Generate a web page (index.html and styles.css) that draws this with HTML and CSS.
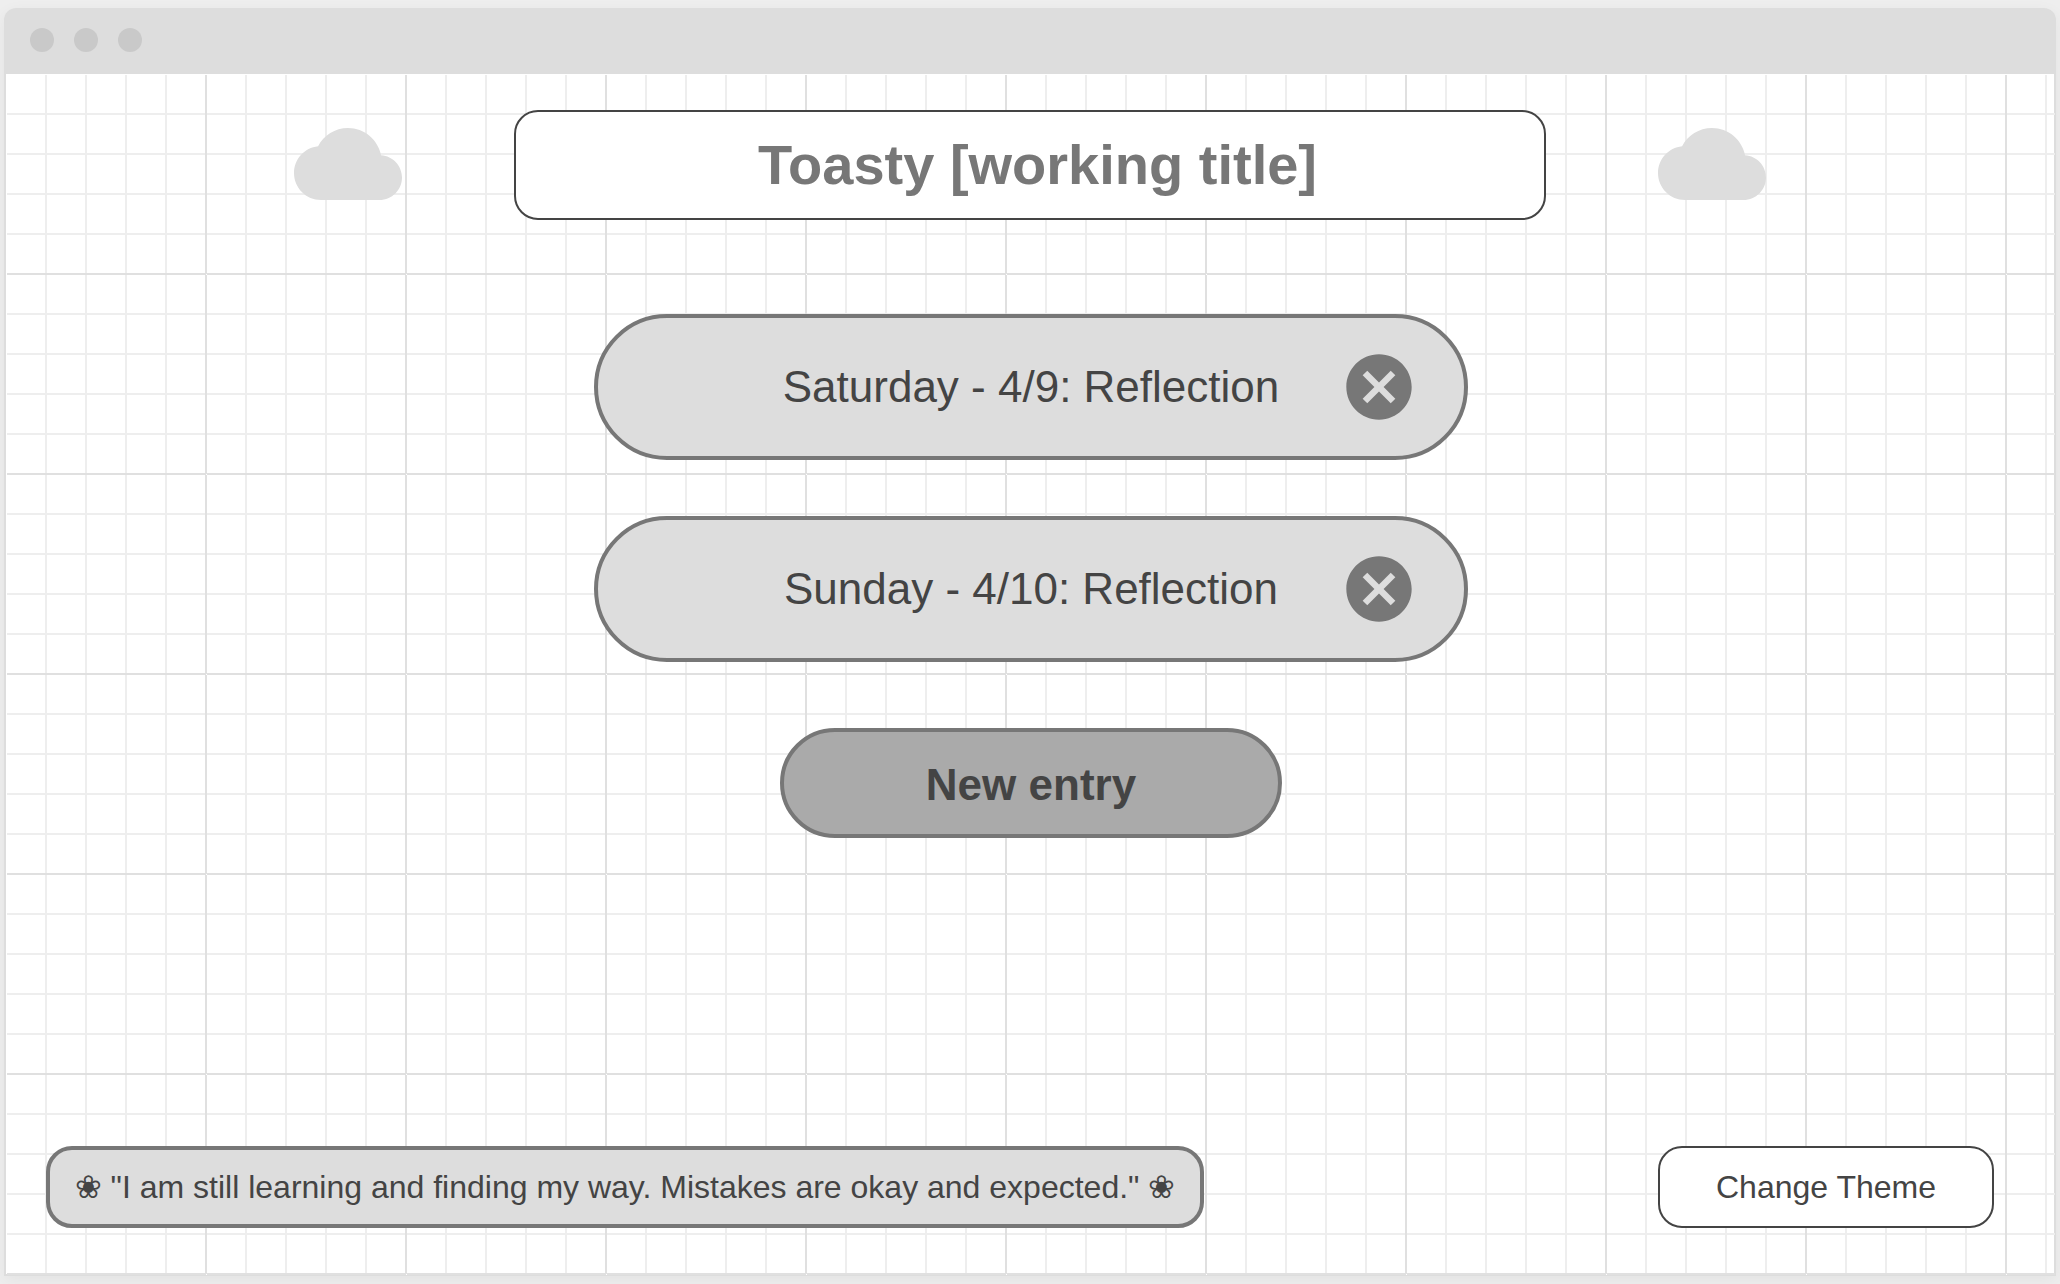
FILE: index.html
```html
<!DOCTYPE html>
<html lang="en">
<head>
<meta charset="utf-8">
<title>Toasty</title>
<link rel="stylesheet" href="styles.css">
</head>
<body>
<svg width="0" height="0" class="defs" aria-hidden="true">
  <symbol id="cloud" viewBox="0 4 24 16"><path d="M19.35 10.04C18.67 6.59 15.64 4 12 4 9.11 4 6.6 5.64 5.35 8.04 2.34 8.36 0 10.91 0 14c0 3.31 2.69 6 6 6h13c2.76 0 5-2.24 5-5 0-2.64-2.05-4.78-4.65-4.96z"/></symbol>
  <symbol id="cancel" viewBox="1.9 1.9 20.2 20.2"><path d="M12 2C6.47 2 2 6.47 2 12s4.47 10 10 10 10-4.47 10-10S17.53 2 12 2zm5 13.59L15.59 17 12 13.41 8.41 17 7 15.59 10.59 12 7 8.41 8.41 7 12 10.59 15.59 7 17 8.41 13.41 12 17 15.59z"/></symbol>
</svg>
<div class="window">
  <div class="titlebar"><span class="dot"></span><span class="dot"></span><span class="dot"></span></div>
  <div class="body">
    <div class="canvas">
      <header class="header">
        <svg class="cloud"><use href="#cloud"/></svg>
        <h1 class="title">Toasty [working title]</h1>
        <svg class="cloud"><use href="#cloud"/></svg>
      </header>
      <main class="entries">
        <div class="entry"><span class="entry-name">Saturday - 4/9: Reflection</span><svg class="cancel"><use href="#cancel"/></svg></div>
        <div class="entry"><span class="entry-name">Sunday - 4/10: Reflection</span><svg class="cancel"><use href="#cancel"/></svg></div>
        <button class="new-entry">New entry</button>
      </main>
      <footer class="footer">
        <div class="quote">❀ "I am still learning and finding my way. Mistakes are okay and expected." ❀</div>
        <button class="theme">Change Theme</button>
      </footer>
    </div>
  </div>
</div>
</body>
</html>
```
FILE: styles.css
```css
* { box-sizing: border-box; }
body {
  margin: 0;
  height: 1284px;
  padding: 8px 4px;
  overflow: hidden;
  background: #eee;
  color: #444;
  font-family: "Liberation Sans", Arial, "DejaVu Serif", sans-serif;
}
.defs { display: block; height: 0; }
button { font: inherit; color: inherit; padding: 0; }
.window {
  height: 1268px;
  display: flex;
  flex-direction: column;
  border-radius: 12px 12px 0 0;
  box-shadow: 0 4px 16px rgba(0, 0, 0, 0.05);
}
.titlebar {
  flex: none;
  height: 66px;
  display: flex;
  align-items: center;
  gap: 20px;
  padding: 0 26px 2px;
  background: #ddd;
  border-radius: 12px 12px 0 0;
}
.dot { width: 24px; height: 24px; border-radius: 50%; background: #c9c9c9; }
.body {
  flex: 1;
  border: 2px solid #ddd;
  border-top: 0;
  background: #fff;
  display: flex;
}
.canvas {
  flex: 1;
  margin: 1px -1px -1px 1px;
  padding: 35px 61px 47px 39px;
  display: flex;
  flex-direction: column;
  background:
    conic-gradient(from 90deg at 199px 199px, #fff 90deg, transparent 0) 0 0 / 200px 200px,
    linear-gradient(to right, transparent 198px, #e0e0e0 0) 0 0 / 200px 200px,
    linear-gradient(transparent 198px, #e0e0e0 0) 0 0 / 200px 200px,
    linear-gradient(to right, transparent 38px, #eee 0) 0 0 / 40px 40px,
    linear-gradient(transparent 38px, #eee 0) 0 0 / 40px 40px;
}
.header { display: flex; gap: 112px; margin-left: 248px; }
.cloud { width: 108px; height: 72px; margin-top: 18px; fill: #ddd; }
.title {
  width: 1032px;
  height: 110px;
  margin: 0;
  padding-left: 15px;
  border: 2px solid #444;
  border-radius: 24px;
  background: #fff;
  color: #777;
  font-size: 56px;
  line-height: 106px;
  text-align: center;
}
.entries {
  display: flex;
  flex-direction: column;
  gap: 56px;
  width: 874px;
  margin: 94px 0 0 548px;
}
.entry {
  height: 146px;
  display: grid;
  grid-template-columns: 1fr auto 1fr;
  align-items: center;
  padding: 0 52px;
  border: 4px solid #777;
  border-radius: 73px;
  background: #ddd;
  font-size: 44px;
}
.entry-name { grid-column: 2; }
.cancel { width: 66px; height: 66px; justify-self: end; fill: #777; }
.new-entry {
  align-self: center;
  width: 502px;
  height: 110px;
  margin-top: 10px;
  border: 4px solid #777;
  border-radius: 55px;
  background: #aaa;
  font-size: 44px;
  font-weight: bold;
  padding-top: 4px;
}
.footer {
  display: flex;
  justify-content: space-between;
  margin-top: auto;
  font-size: 32px;
}
.quote, .theme { height: 82px; white-space: nowrap; border-radius: 26px; }
.quote {
  width: 1158px;
  border: 4px solid #777;
  background: #ddd;
  line-height: 74px;
  text-align: center;
}
.theme { width: 336px; border: 2px solid #444; border-radius: 24px; background: #fff; }
```
